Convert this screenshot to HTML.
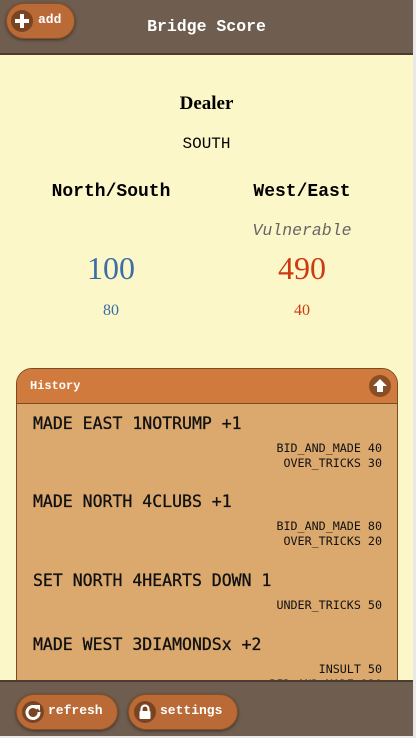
<!DOCTYPE html>
<html><head><style>
*{margin:0;padding:0;box-sizing:border-box}
body{width:416px;height:738px;overflow:hidden;background:#e9e9e9;position:relative;font-family:"Liberation Mono",monospace}
#main{position:absolute;left:0;top:0;width:413px;height:736px;background:#fcf7c8;overflow:hidden}
.hdr{position:absolute;left:0;top:0;width:413px;height:55px;background:#6f5e4f;border-bottom:2px solid #4a3c30}
.hdr .t{position:absolute;left:0;width:413px;top:17px;text-align:center;color:#fff;font-weight:bold;font-size:16.5px}
.btn{position:absolute;height:36px;border-radius:18px;background:#b96a36;box-shadow:0 1px 3px rgba(0,0,0,.5);color:#fff;font-weight:bold;font-size:13px;border:1px solid #8d4e26}
.btn .ic{position:absolute;left:6px;top:6px;width:22px;height:22px;border-radius:50%;background:#7a4423}
.btn span{position:absolute;left:32px;top:9px}
.c{position:absolute;text-align:center}
.card{position:absolute;left:16px;top:368px;width:382px;height:340px;background:#dba86d;border:1px solid #7a4a22;border-radius:16px 16px 0 0;overflow:hidden}
.ch{height:35px;background:#d07a3e;border-bottom:1px solid #7a4a22;position:relative;color:#fff;font-weight:bold;font-size:12px}
.ch span{position:absolute;left:13px;top:10px}
.it{position:absolute;left:16px;font-size:16.5px;color:#111;font-family:"DejaVu Sans Mono",monospace;-webkit-text-stroke:0.3px #111}
.d{position:absolute;right:15px;font-size:12px;text-align:right;line-height:15px;color:#111;font-family:"DejaVu Sans Mono",monospace;font-size:11.7px}
.ftr{position:absolute;left:0;top:680px;width:413px;height:56px;background:#6f5e4f;border-top:2px solid #4a3c30}
</style></head><body>
<div id="main">
<div class="hdr"><div class="t">Bridge Score</div>
<div class="btn" style="left:6px;top:3px;width:69px"><div class="ic" style="left:4px;top:6px"><svg width="22" height="22"><path d="M11 4v14M4 11h14" stroke="#fff" stroke-width="4"/></svg></div><span style="left:31px;top:8px">add</span></div></div>
<div class="c" style="left:0;width:413px;top:93px;font-family:'Liberation Serif',serif;font-weight:bold;font-size:19px">Dealer</div>
<div class="c" style="left:0;width:413px;top:135px;font-size:16px">SOUTH</div>
<div class="c" style="left:11px;width:200px;top:182px;font-size:18px;font-weight:bold">North/South</div>
<div class="c" style="left:202px;width:200px;top:182px;font-size:18px;font-weight:bold">West/East</div>
<div class="c" style="left:202px;width:200px;top:221px;font-size:16.5px;font-style:italic;color:#666">Vulnerable</div>
<div class="c" style="left:11px;width:200px;top:250px;font-family:'Liberation Serif',serif;font-size:32px;color:#3a6ea5">100</div>
<div class="c" style="left:202px;width:200px;top:250px;font-family:'Liberation Serif',serif;font-size:32px;color:#cc3a12">490</div>
<div class="c" style="left:11px;width:200px;top:302px;font-family:'Liberation Serif',serif;font-size:16px;color:#3a6ea5">80</div>
<div class="c" style="left:202px;width:200px;top:302px;font-family:'Liberation Serif',serif;font-size:16px;color:#cc3a12">40</div>
<div class="card"><div class="ch"><span>History</span>
<svg style="position:absolute;right:6px;top:6px" width="22" height="22"><circle cx="11" cy="11" r="11" fill="#8a4e26"/><path d="M11 4l-7 7h4v6h6v-6h4z" fill="#fff"/></svg></div>
<div class="it" style="top:45px">MADE EAST 1NOTRUMP +1</div>
<div class="d" style="top:72px">BID_AND_MADE 40<br>OVER_TRICKS 30</div>
<div class="it" style="top:123px">MADE NORTH 4CLUBS +1</div>
<div class="d" style="top:150px">BID_AND_MADE 80<br>OVER_TRICKS 20</div>
<div class="it" style="top:202px">SET NORTH 4HEARTS DOWN 1</div>
<div class="d" style="top:229px">UNDER_TRICKS 50</div>
<div class="it" style="top:266px">MADE WEST 3DIAMONDSx +2</div>
<div class="d" style="top:293px">INSULT 50<br>BID_AND_MADE 120</div>
</div>
<div class="ftr">
<div class="btn" style="left:16px;top:12px;width:102px"><div class="ic" style="left:5px;top:6px"><svg width="22" height="22"><path d="M15.5 7.5A6 6 0 1 0 17 11" fill="none" stroke="#fff" stroke-width="3"/><path d="M12 4h6v6z" fill="#fff"/></svg></div><span style="left:31px;top:8px">refresh</span></div>
<div class="btn" style="left:128px;top:12px;width:110px"><div class="ic" style="left:5px;top:6px"><svg width="22" height="22"><path d="M7.5 10V8a3.5 3.5 0 0 1 7 0v2" fill="none" stroke="#fff" stroke-width="2.2"/><rect x="5.5" y="10" width="11" height="8" rx="1" fill="#fff"/></svg></div><span style="left:31px;top:8px">settings</span></div>
</div>
</div>
</body></html>
